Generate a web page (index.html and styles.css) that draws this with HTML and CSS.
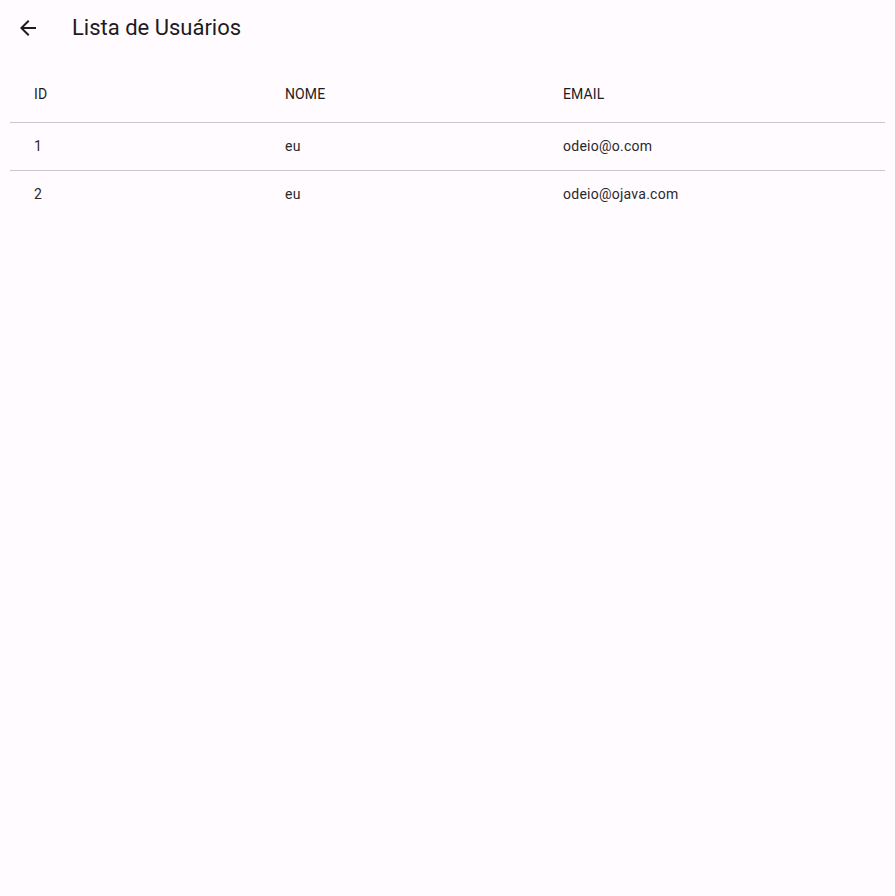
FILE: index.html
```html
<!DOCTYPE html>
<html lang="pt">
<head>
<meta charset="utf-8">
<title>Lista de Usuários</title>
<link rel="stylesheet" href="styles.css">
</head>
<body>
<header class="appbar">
  <button class="back" aria-label="Voltar">
    <svg width="24" height="24" viewBox="0 0 24 24"><path d="M20 11H7.83l5.59-5.59L12 4l-8 8 8 8 1.41-1.41L7.83 13H20v-2z" fill="#1C1B1F"/></svg>
  </button>
  <h1 class="title">Lista de Usuários</h1>
</header>
<main class="content">
  <div class="table">
    <div class="row head">
      <div class="cell c1">ID</div>
      <div class="cell">NOME</div>
      <div class="cell">EMAIL</div>
    </div>
    <div class="row data">
      <div class="cell c1">1</div>
      <div class="cell">eu</div>
      <div class="cell">odeio@o.com</div>
    </div>
    <div class="row data">
      <div class="cell c1">2</div>
      <div class="cell">eu</div>
      <div class="cell">odeio@ojava.com</div>
    </div>
  </div>
</main>
</body>
</html>
```
FILE: styles.css
```css
html, body {
  margin: 0;
  padding: 0;
  background: #FFFBFE;
  color: #1C1B1F;
  font-family: Roboto, "Noto Sans", sans-serif;
}
.appbar {
  height: 56px;
  display: flex;
  align-items: center;
}
.back {
  width: 24px;
  height: 24px;
  margin-left: 16px;
  padding: 0;
  border: 0;
  background: none;
  display: flex;
}
.title {
  margin: 0 0 0 32px;
  font-size: 22px;
  font-weight: 400;
  line-height: 28px;
}
.content {
  padding: 10px;
}
.table {
  display: flex;
  flex-direction: column;
}
.row {
  display: grid;
  grid-template-columns: 275px 278px 1fr;
  align-items: center;
  font-size: 14px;
}
.row.head {
  height: 56px;
  letter-spacing: 0.1px;
  font-weight: 400;
}
.row.data {
  height: 48px;
  border-top: 1px solid #CAC4D0;
  padding-bottom: 1px;
  box-sizing: border-box;
  letter-spacing: 0.25px;
  color: #2A282E;
}
.cell.c1 {
  padding-left: 24px;
}
```
